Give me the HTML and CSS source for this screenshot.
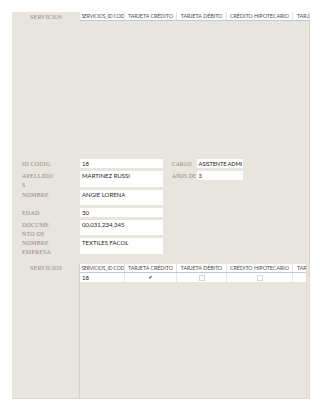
FILE: index.html
```html
<!DOCTYPE html>
<html>
<head>
<meta charset="utf-8">
<link rel="stylesheet" href="styles.css">
</head>
<body>
<div class="panel">
  <div class="sub sub-top">
    <div class="sub-label">SERVICIOS</div>
    <div class="sheet">
      <div class="sheet-head">
        <div class="c c1">SERVICIOS_ID COD</div>
        <div class="c c2">TARJETA CRÉDITO</div>
        <div class="c c3">TARJETA DÉBITO</div>
        <div class="c c4">CRÉDITO HIPOTECARIO</div>
        <div class="c c5">TARJE</div>
      </div>
    </div>
  </div>

  <div class="form">
    <div class="lbl r1">ID CODIG</div>
    <div class="inp r1">18</div>
    <div class="lbl2 r1">CARGO</div>
    <div class="inp2 r1">ASISTENTE ADMI</div>

    <div class="lbl r2">APELLIDO<br>S</div>
    <div class="inp r2 tall">MARTINEZ RUSSI</div>
    <div class="lbl2 r2">AÑOS DE</div>
    <div class="inp2 r2">3</div>

    <div class="lbl r3">NOMBRE</div>
    <div class="inp r3 tall">ANGIE LORENA</div>

    <div class="lbl r4">EDAD</div>
    <div class="inp r4">30</div>

    <div class="lbl r5">DOCUME<br>NTO DE</div>
    <div class="inp r5 tall">00,031,234,345</div>

    <div class="lbl r6">NOMBRE<br>EMPRESA</div>
    <div class="inp r6 tall">TEXTILES FACOL</div>
  </div>

  <div class="sub sub-bottom">
    <div class="sub-label">SERVICIOS</div>
    <div class="sheet sheet-body">
      <div class="sheet-head">
        <div class="c c1">SERVICIOS_ID COD</div>
        <div class="c c2">TARJETA CRÉDITO</div>
        <div class="c c3">TARJETA DÉBITO</div>
        <div class="c c4">CRÉDITO HIPOTECARIO</div>
        <div class="c c5">TARJE</div>
      </div>
      <div class="sheet-row">
        <div class="d c1 left">18</div>
        <div class="d c2"><span class="check">✔</span></div>
        <div class="d c3"><span class="box"></span></div>
        <div class="d c4"><span class="box"></span></div>
        <div class="d c5"></div>
      </div>
    </div>
  </div>
</div>
</body>
</html>
```

FILE: styles.css
```css
html, body {
  margin: 0;
  padding: 0;
  background: #ffffff;
}

.panel {
  margin: 12px 0 0 12px;
  width: 298px;
  height: 387px;
  background: #e8e4de;
  display: flex;
  flex-direction: column;
  box-sizing: border-box;
  border-right: 1px solid #dcd6ce;
  border-bottom: 1px solid #dcd6ce;
}

.sub {
  display: flex;
}

.sub-top {
  height: 147px;
}

.sub-label {
  width: 68px;
  box-sizing: border-box;
  padding: 2px 0 0 18px;
  font-family: "Liberation Serif", serif;
  font-size: 6px;
  color: #958b82;
  letter-spacing: 0.2px;
}

.sheet {
  flex: 1;
  overflow: hidden;
  display: flex;
  flex-direction: column;
}

.sheet-head {
  display: flex;
  height: 9px;
  background: #ffffff;
  border-bottom: 1px solid #b9cbe0;
  box-sizing: border-box;
}

.c, .d {
  flex: none;
  box-sizing: border-box;
  border-right: 1px solid #e2e2e2;
  font-family: "Lato", "Open Sans", sans-serif;
  font-size: 5.3px;
  line-height: 8px;
  color: #4a4a4a;
  text-align: center;
  white-space: nowrap;
  overflow: hidden;
}

.c.c1 {
  text-align: left;
  padding-left: 1.5px;
  font-size: 5px;
  letter-spacing: -0.12px;
}

.c1 { width: 45px; }
.c2 { width: 52px; }
.c3 { width: 50px; }
.c4 { width: 66px; }
.c5 { width: 30px; text-align: left; padding-left: 4px; border-right: none; }

.form {
  display: grid;
  grid-template-columns: 58px 83px 9px 25px 46px;
  grid-template-rows: 9px 16px 15px 9px 15px 16px;
  row-gap: 3px;
  padding-left: 10px;
  align-items: start;
}

.lbl, .lbl2 {
  font-family: "Liberation Serif", serif;
  font-size: 6px;
  line-height: 9.5px;
  color: #958b82;
  letter-spacing: 0.2px;
  white-space: nowrap;
  padding-top: 0.5px;
}

.lbl { grid-column: 1; }
.lbl2 {
  grid-column: 4;
  font-size: 5.6px;
  letter-spacing: 0;
}

.inp, .inp2 {
  background: #ffffff;
  font-family: "Lato", "Open Sans", sans-serif;
  font-size: 6px;
  line-height: 9px;
  height: 9px;
  color: #262626;
  padding-left: 2px;
  box-sizing: border-box;
  white-space: nowrap;
  overflow: hidden;
}

.inp2 {
  font-size: 5.7px;
  letter-spacing: -0.15px;
  padding-left: 1.5px;
}

.inp { grid-column: 2; }
.inp2 { grid-column: 5; }
.inp.tall { height: 100%; }

.r1 { grid-row: 1; }
.r2 { grid-row: 2; }
.r3 { grid-row: 3; }
.r4 { grid-row: 4; }
.r5 { grid-row: 5; }
.r6 { grid-row: 6; }

.sub-bottom {
  margin-top: 10px;
  flex: 1;
}

.sub-bottom .sub-label {
  padding-top: 1px;
}

.sheet-body {
  border-left: 1px solid #d6d0c8;
  margin-left: -1px;
  border-right: 1px solid #ddd8d0;
  margin-right: 2px;
}

.sheet-row {
  display: flex;
  height: 9px;
  background: #ffffff;
}

.d {
  border-right: 1px solid #e8e8e8;
  height: 9px;
  display: flex;
  align-items: center;
  justify-content: center;
}

.d.left {
  justify-content: flex-start;
  padding-left: 2px;
  color: #262626;
  font-size: 6px;
}

.check {
  font-family: "DejaVu Sans", sans-serif;
  font-size: 5px;
  color: #222;
  line-height: 5px;
}

.box {
  display: block;
  width: 4px;
  height: 4px;
  border: 0.6px solid #d6d6d6;
  border-radius: 0.5px;
  background: #fff;
}
```
